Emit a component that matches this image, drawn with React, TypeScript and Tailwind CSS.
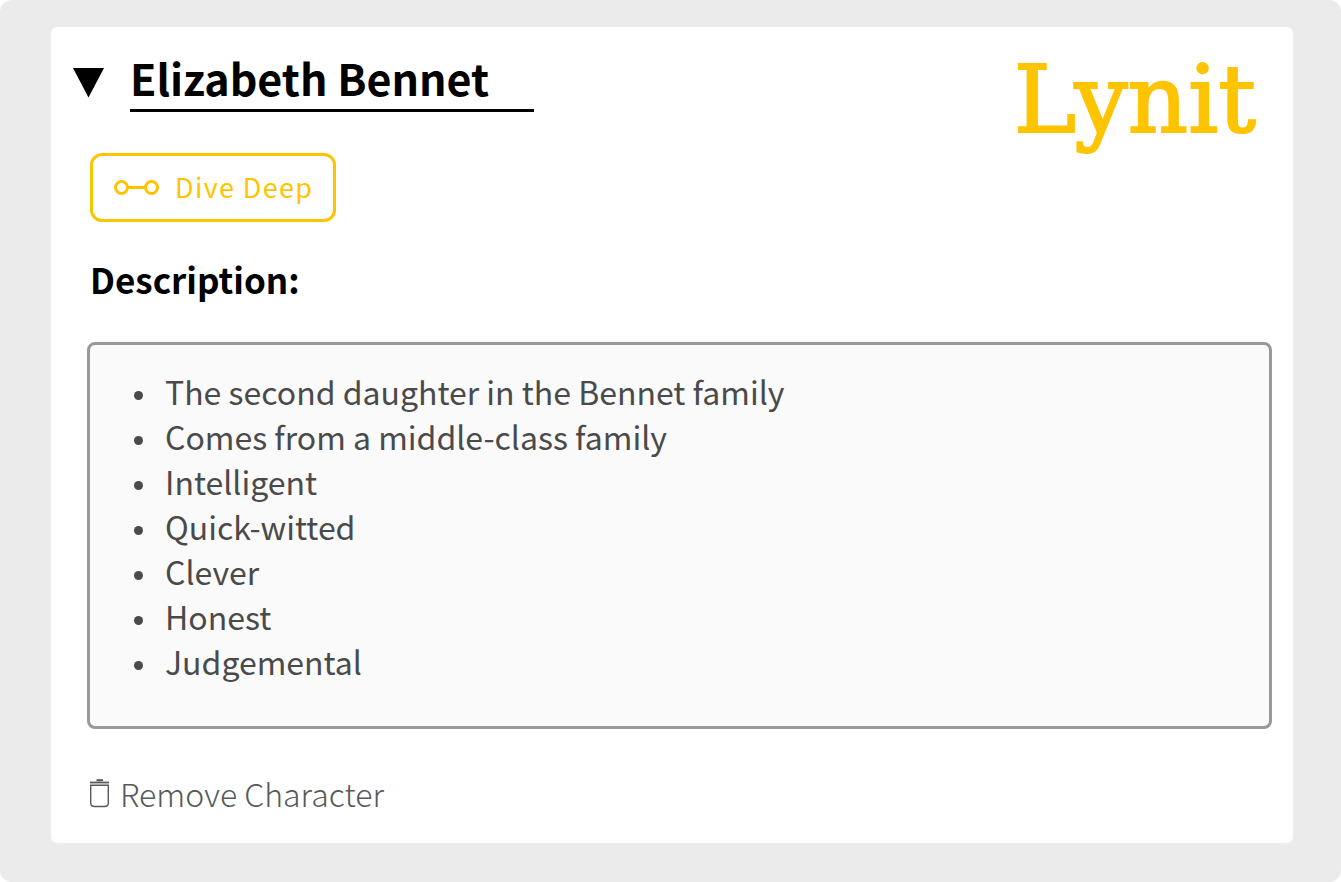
import React, { useState } from "react";

const traits = [
  "The second daughter in the Bennet family",
  "Comes from a middle-class family",
  "Intelligent",
  "Quick-witted",
  "Clever",
  "Honest",
  "Judgemental",
];

const LinkIcon = () => (
  <svg width="46" height="16" viewBox="0 0 46 16" fill="none" stroke="currentColor" strokeWidth="3" aria-hidden="true">
    <circle cx="8.5" cy="7.5" r="6" />
    <circle cx="38.5" cy="7.5" r="6" />
    <path d="M14.5 7.5H32.5" />
  </svg>
);

const TrashIcon = () => (
  <svg width="20" height="29" viewBox="0 0 20 29" fill="none" stroke="currentColor" aria-hidden="true">
    <path d="M6.5 1.2H13" strokeWidth="2" />
    <path d="M0 3.5H19" strokeWidth="1.8" />
    <path d="M0.7 6.2H18.3V24Q18.3 27.5 14.5 27.5H4.5Q0.7 27.5 0.7 24Z" strokeWidth="1.4" />
  </svg>
);

export default function App() {
  const [name, setName] = useState("Elizabeth Bennet");
  const [isOpen, setIsOpen] = useState(true);

  return (
    <div className="min-h-screen bg-white">
      <div className="min-h-screen rounded-xl bg-[#ebebeb] pt-[27px] pr-12 pb-[39px] pl-[51px] font-['Noto_Sans_CJK_SC',sans-serif]">
        <main className="rounded-md bg-white pt-7 pr-[21px] pb-[23px] pl-9">
          <header className="flex items-start justify-between">
            <div className="-ml-[15px] flex items-start">
              <button
                type="button"
                aria-label="Toggle character"
                aria-expanded={isOpen}
                onClick={() => setIsOpen(!isOpen)}
                className="mt-3 mr-6 p-px"
              >
                <svg width="32" height="30" viewBox="0 0 32 30" aria-hidden="true">
                  <path d="M0 0H31L15.5 29.5Z" fill="black" />
                </svg>
              </button>
              <input
                type="text"
                aria-label="Character name"
                value={name}
                onChange={(e) => setName(e.target.value)}
                className="block h-[57px] w-[404px] border-b-3 border-black bg-transparent pb-2.5 text-[43px] font-bold text-black outline-none"
              />
            </div>
            {/* stroke thickens the slab serifs of the wordmark */}
            <div className="mr-4 h-[98px] font-['DejaVu_Serif',serif] text-[94px] leading-[90px] text-[#ffc400] [-webkit-text-stroke:2px_#ffc400]">
              Lynit
            </div>
          </header>

          <button
            type="button"
            className="ml-[3px] flex h-[69px] items-center gap-4 rounded-xl border-3 border-[#ffc400] px-5 text-[27px] leading-9 tracking-wider text-[#ffc400]"
          >
            <LinkIcon />
            <span className="pb-0.5">Dive Deep</span>
          </button>

          {isOpen && (
            <section>
              <h2 className="mt-[31px] ml-[3px] text-[35px] leading-[52px] font-bold text-black">Description:</h2>
              <div className="mt-[37px] rounded-lg border-3 border-[#999999] bg-[#fafafa] pt-6 pb-[42px] pl-11">
                <ul className="text-[32px] leading-[45px] text-[#4a4a4a]">
                  {traits.map((trait) => (
                    <li
                      key={trait}
                      className="flex items-center gap-[22px] before:mt-[7px] before:size-[9px] before:shrink-0 before:rounded-full before:bg-current"
                    >
                      {trait}
                    </li>
                  ))}
                </ul>
              </div>
            </section>
          )}

          <button type="button" className="mt-[37px] ml-[3px] flex items-center gap-2.5 text-[32px] leading-[54px] font-light text-[#58595b]">
            <TrashIcon />
            Remove Character
          </button>
        </main>
      </div>
    </div>
  );
}
